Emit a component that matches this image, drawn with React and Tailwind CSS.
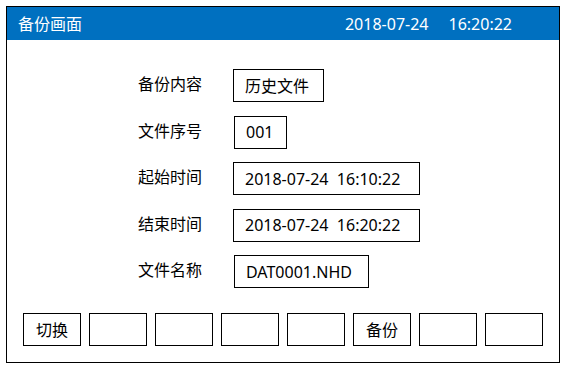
import React from "react";

const font = { fontFamily: '"Noto Sans", "Noto Sans CJK SC", sans-serif' };

function Row({ label, value, boxClass }) {
  return (
    <div className="flex h-[33px] items-center">
      <div className="w-[95px] shrink-0 pb-[3px] text-[16px] leading-none text-black">{label}</div>
      <div className={"flex h-[33px] items-center border border-black pl-[11px] text-[16px] leading-none text-black " + boxClass}>
        <span className="whitespace-pre">{value}</span>
      </div>
    </div>
  );
}

export default function App() {
  const buttons = ["切换", "", "", "", "", "备份", "", ""];
  return (
    <div className="h-[366px] w-[565px] bg-white pl-[6px] pt-[6px]" style={font}>
      <div className="flex h-[357px] w-[554px] flex-col border border-black">
        <div className="flex h-[33px] shrink-0 items-center justify-between bg-[#0070c0] pl-[11px] pr-[47px] text-[16px] leading-none text-white">
          <span>备份画面</span>
          <div className="flex gap-[20px]">
            <span>2018-07-24</span>
            <span>16:20:22</span>
          </div>
        </div>
        <div className="flex flex-col gap-[13.5px] pl-[131px] pt-[29px]">
          <Row label="备份内容" value="历史文件" boxClass="w-[91px]" />
          <Row label="文件序号" value="001" boxClass="ml-[1px] w-[53px] pl-[10px]" />
          <Row label="起始时间" value="2018-07-24  16:10:22" boxClass="w-[187px]" />
          <Row label="结束时间" value="2018-07-24  16:20:22" boxClass="w-[187px]" />
          <Row label="文件名称" value="DAT0001.NHD" boxClass="ml-[1px] w-[135px] pl-[10px]" />
        </div>
        <div className="mt-[25px] flex gap-[8px] pl-[16px]">
          {buttons.map((b, i) => (
            <div
              key={i}
              className="flex h-[33px] w-[58px] items-center justify-center border border-black text-[16px] leading-none text-black"
            >
              {b}
            </div>
          ))}
        </div>
      </div>
    </div>
  );
}
